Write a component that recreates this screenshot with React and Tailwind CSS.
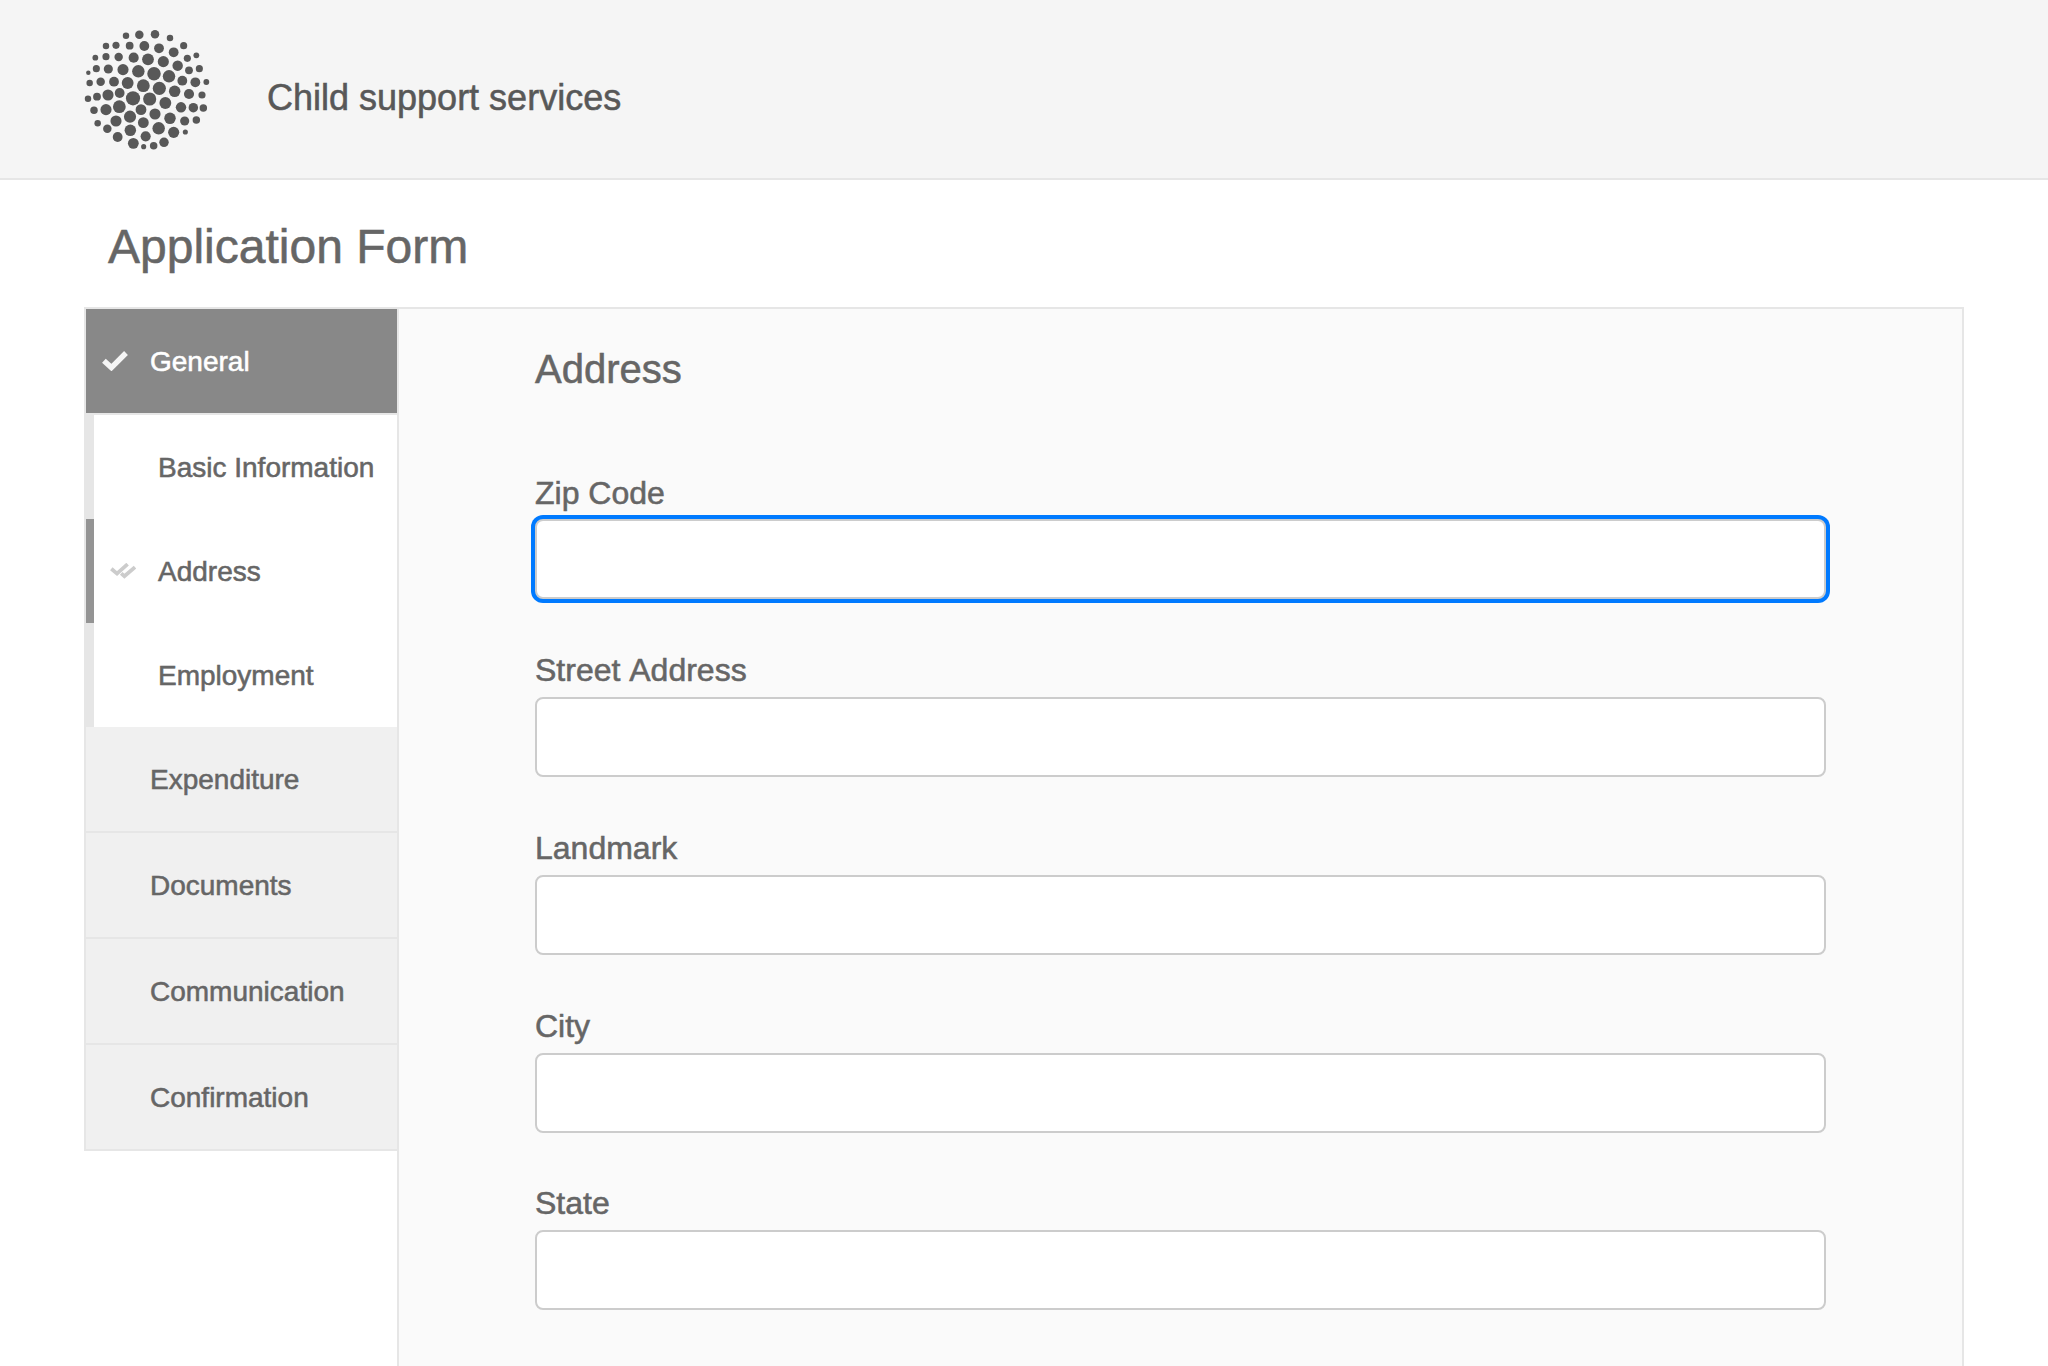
import React from "react";

// Logo dots: x, y, radius in a 420-unit box
const DOTS = [
  [150, 47, 9], [190, 44, 12], [237, 43, 12], [282, 54, 9],
  [90, 78, 9], [120, 76, 10], [161, 77, 11], [205, 78, 14], [249, 85, 14], [293, 97, 14], [323, 77, 10],
  [58, 113, 8], [90, 110, 10], [128, 111, 12], [173, 113, 14.5], [216, 118, 17], [262, 125, 16], [305, 137, 15], [334, 115, 10], [361, 106, 8],
  [37, 158, 6], [61, 146, 10], [97, 147, 13], [141, 149, 16], [187, 154, 18], [234, 161, 19.5], [279, 169, 18], [339, 151, 11], [370, 146, 10],
  [41, 189, 9], [74, 185, 12], [114, 185, 14], [155, 189, 17], [202, 197, 18.5], [250, 205, 19], [319, 182, 14], [358, 187, 14], [391, 186, 8],
  [36, 236, 9], [63, 230, 11], [96, 225, 16], [131, 219, 14], [171, 235, 20.5], [221, 237, 19], [296, 214, 16.5], [339, 222, 14.5], [378, 225, 10],
  [54, 271, 10.5], [90, 269, 16], [130, 260, 18.5], [195, 269, 15.5], [268, 249, 17], [315, 262, 15], [352, 263, 13.5], [382, 264, 10.5],
  [65, 310, 9], [120, 303, 16], [162, 290, 17.5], [237, 282, 16], [282, 295, 16.5], [326, 303, 13], [361, 300, 10.5],
  [94, 326, 12], [163, 331, 16.5], [202, 308, 15.5], [248, 325, 18], [293, 337, 16], [328, 336, 7],
  [125, 351, 14], [172, 370, 15.5], [209, 349, 14.5], [264, 367, 13.5], [203, 380, 7], [233, 377, 10.5],
];

function Logo() {
  return (
    <svg className="ml-19 mt-5 size-[140px] shrink-0" viewBox="0 0 420 420" fill="#585858">
      {DOTS.map(([x, y, r]) => (
        <circle key={`${x}-${y}`} cx={x} cy={y} r={r + 0.7} />
      ))}
    </svg>
  );
}

function Check() {
  return (
    <svg className="h-5 w-[26px]" viewBox="0 0 26 20" fill="none" stroke="#f5f5f5" strokeWidth="5.4">
      <path d="M1.9 9.7 9.4 16.6 24 2" />
    </svg>
  );
}

function DoubleCheck() {
  return (
    <svg className="h-4 w-[26px]" viewBox="0 0 26 16" fill="none" stroke="#cccccc" strokeWidth="3.8">
      <path d="M1.3 5.8 7 10.6 17.6 1.2" />
      <path d="M11.2 10.4 14.4 13.2 25 4.1" />
    </svg>
  );
}

function SubItem({ label, active }) {
  return (
    <li
      className={
        "flex h-[104px] items-center border-l-8 bg-white text-[#666] " +
        (active ? "border-[#949494]" : "border-[#e6e6e6]")
      }
    >
      <span className="flex w-16 shrink-0 pl-4">{active && <DoubleCheck />}</span>
      <span className="pt-0.5">{label}</span>
    </li>
  );
}

function Field({ label, focused }) {
  return (
    <label className="mb-[53px] block last:-mt-[54px] last:pt-[53px]">
      <span
        className={
          "block text-[32px] leading-[37px] [font-kerning:none] " + (focused ? "mb-[7px]" : "mb-2")
        }
      >
        {label}
      </span>
      <input
        type="text"
        className={
          "block h-20 w-full rounded-lg border-2 border-[#ccc] bg-white px-4 outline-none " +
          (focused ? "ring-4 ring-[#007aff]" : "")
        }
      />
    </label>
  );
}

export default function App() {
  return (
    <div className="flex h-[1366px] w-[2048px] flex-col overflow-hidden bg-white font-['Liberation_Sans',Arial,sans-serif] text-[#666] [-webkit-text-stroke:0.55px]">
      <header className="flex h-[180px] shrink-0 border-b-2 border-[#e6e6e6] bg-[#f5f5f5]">
        <Logo />
        <p className="ml-[51px] mt-[77px] text-[36px] leading-[41px] text-[#585858]">Child support services</p>
      </header>
      <h1 className="ml-27 mt-[39px] mb-[33px] text-[48px] leading-[55px]">Application Form</h1>
      <div className="ml-21 flex w-[1880px] flex-1">
        <nav className="w-[313px] shrink-0 text-[28px] leading-8">
          <ul className="border-l-2 border-t-2 border-[#e6e6e6]">
            <li className="flex h-[106px] items-center border-b-2 border-[#e6e6e6] bg-[#888] text-white">
              <span className="flex w-16 shrink-0 pl-4">
                <Check />
              </span>
              <span className="pt-0.5">General</span>
            </li>
            <SubItem label="Basic Information" />
            <SubItem label="Address" active />
            <SubItem label="Employment" />
            {["Expenditure", "Documents", "Communication", "Confirmation"].map((label) => (
              <li key={label} className="flex h-[106px] items-center border-b-2 border-[#e6e6e6] bg-[#f0f0f0] pl-16 pt-0.5">
                {label}
              </li>
            ))}
          </ul>
        </nav>
        <main className="h-[1100px] flex-1 border-x-2 border-t-2 border-[#e6e6e6] bg-[#fafafa] px-[136px] pt-[37px]">
          <h2 className="mb-[83px] text-[40px] leading-[46px]">Address</h2>
          <Field label="Zip Code" focused />
          <Field label="Street Address" />
          <Field label="Landmark" />
          <Field label="City" />
          <Field label="State" />
        </main>
      </div>
    </div>
  );
}
